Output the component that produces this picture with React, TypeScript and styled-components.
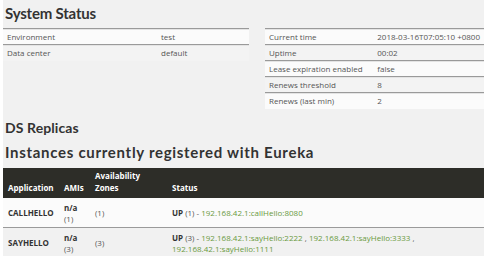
import React from 'react';
import styled, { createGlobalStyle } from 'styled-components';

const GlobalStyle = createGlobalStyle`
  html, body {
    margin: 0;
    padding: 0;
    background: #ffffff;
  }
  body {
    font-family: 'Open Sans', 'Noto Sans', sans-serif;
    color: #555;
  }
`;

const Page = styled.div`
  width: 481px;
  height: 256px;
  margin-left: 3px;
  background: #f1f1f1;
  overflow: hidden;
  box-sizing: border-box;
`;

const Heading = styled.h1<{ size: number; top: number; spacing: number }>`
  margin: ${(p) => p.top}px 0 0 2px;
  font-family: 'Lato', 'Open Sans', sans-serif;
  font-weight: 700;
  font-size: ${(p) => p.size}px;
  line-height: 1;
  color: #333;
  letter-spacing: ${(p) => p.spacing}px;
`;

const TopRow = styled.div`
  display: flex;
  justify-content: space-between;
  align-items: flex-start;
`;

const LeftCol = styled.div`
  width: 246px;
`;

const RightCol = styled.div`
  width: 219px;
  padding-top: 28px;
`;

const InfoTable = styled.table<{ offset?: number }>`
  width: 100%;
  border-collapse: collapse;
  font-size: 8px;
  color: #555;
  margin-top: ${(p) => p.offset ?? 0}px;
`;

const InfoRow = styled.tr<{ light?: boolean }>`
  background: ${(p) => (p.light ? '#fbfbfb' : '#f3f3f3')};
  border-top: 1px solid #9a9a9a;
  height: 16px;
`;

const InfoCell = styled.td<{ w?: number }>`
  padding: 0 4px;
  width: ${(p) => (p.w ? `${p.w}px` : 'auto')};
  white-space: nowrap;
  vertical-align: middle;
  box-shadow: inset 0 1px 0 #e4e4e4;
`;

const InstTable = styled.table`
  width: 100%;
  border-collapse: collapse;
  font-size: 8px;
  margin-top: 8px;
`;

const HeadRow = styled.tr`
  background: #2d2d28;
  height: 30px;
`;

const HeadCell = styled.th<{ w?: number }>`
  color: #fff;
  font-weight: 700;
  text-align: left;
  vertical-align: bottom;
  padding: 0 4px 3px 5px;
  line-height: 12px;
  width: ${(p) => (p.w ? `${p.w}px` : 'auto')};
`;

const BodyRow = styled.tr<{ light?: boolean }>`
  background: ${(p) => (p.light ? '#fbfbfb' : '#f1f1f1')};
  border-top: 1px solid ${(p) => (p.light ? '#2d2d28' : '#9a9a9a')};
  height: 30px;
`;

const BodyCell = styled.td`
  padding: 3px 4px 3px 5px;
  vertical-align: middle;
  line-height: 11px;
  color: #555;
`;

const AppName = styled.span`
  font-weight: 700;
  color: #333;
`;

const Strong = styled.b`
  font-weight: 700;
  color: #333;
`;

const Link = styled.span`
  color: #6a9a3e;
  white-space: nowrap;
`;

const leftInfo = [
  ['Environment', 'test'],
  ['Data center', 'default'],
];

const rightInfo = [
  ['Current time', '2018-03-16T07:05:10 +0800'],
  ['Uptime', '00:02'],
  ['Lease expiration enabled', 'false'],
  ['Renews threshold', '8'],
  ['Renews (last min)', '2'],
];

export default function App() {
  return (
    <>
      <GlobalStyle />
      <Page>
        <TopRow>
          <LeftCol>
            <Heading size={15} top={6} spacing={-0.2}>
              System Status
            </Heading>
            <InfoTable offset={7}>
              <tbody>
                {leftInfo.map(([k, v], i) => (
                  <InfoRow key={k} light={i % 2 === 0}>
                    <InfoCell w={146}>{k}</InfoCell>
                    <InfoCell>{v}</InfoCell>
                  </InfoRow>
                ))}
              </tbody>
            </InfoTable>
          </LeftCol>
          <RightCol>
            <InfoTable>
              <tbody>
                {rightInfo.map(([k, v], i) => (
                  <InfoRow key={k} light={i % 2 === 0}>
                    <InfoCell w={110}>{k}</InfoCell>
                    <InfoCell>{v}</InfoCell>
                  </InfoRow>
                ))}
              </tbody>
            </InfoTable>
          </RightCol>
        </TopRow>
        <Heading size={14} top={12} spacing={0.1}>
          DS Replicas
        </Heading>
        <Heading size={15} top={10} spacing={0.7}>
          Instances currently registered with Eureka
        </Heading>
        <InstTable>
          <thead>
            <HeadRow>
              <HeadCell w={47}>Application</HeadCell>
              <HeadCell w={22}>AMIs</HeadCell>
              <HeadCell w={68}>
                Availability
                <br />
                Zones
              </HeadCell>
              <HeadCell>Status</HeadCell>
            </HeadRow>
          </thead>
          <tbody>
            <BodyRow light>
              <BodyCell>
                <AppName>CALLHELLO</AppName>
              </BodyCell>
              <BodyCell>
                <Strong>n/a</Strong>
                <br />
                (1)
              </BodyCell>
              <BodyCell>(1)</BodyCell>
              <BodyCell>
                <Strong>UP</Strong> (1) - <Link>192.168.42.1:callHello:8080</Link>
              </BodyCell>
            </BodyRow>
            <BodyRow>
              <BodyCell>
                <AppName>SAYHELLO</AppName>
              </BodyCell>
              <BodyCell>
                <Strong>n/a</Strong>
                <br />
                (3)
              </BodyCell>
              <BodyCell>(3)</BodyCell>
              <BodyCell>
                <Strong>UP</Strong> (3) - <Link>192.168.42.1:sayHello:2222</Link> ,{' '}
                <Link>192.168.42.1:sayHello:3333</Link> ,{' '}
                <Link>192.168.42.1:sayHello:1111</Link>
              </BodyCell>
            </BodyRow>
          </tbody>
        </InstTable>
      </Page>
    </>
  );
}
